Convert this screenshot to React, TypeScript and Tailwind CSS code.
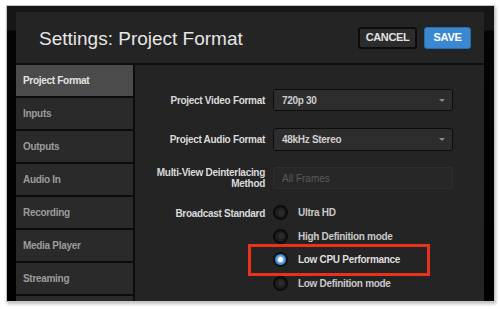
export default function App() {
  const menu = ['Project Format', 'Inputs', 'Outputs', 'Audio In', 'Recording', 'Media Player', 'Streaming', ''];

  const standards = [
    { label: 'Ultra HD', selected: false },
    { label: 'High Definition mode', selected: false },
    { label: 'Low CPU Performance', selected: true },
    { label: 'Low Definition mode', selected: false },
  ];

  const font = { fontFamily: '"Liberation Sans", Arial, sans-serif' };

  return (
    <div className="w-[500px] h-[309px] bg-white pt-[5px] pl-[6px] overflow-hidden" style={font}>
      <div className="w-[489px] h-[297px] border border-[#c4c4c4] shadow-[1px_2px_3px_rgba(0,0,0,0.25)]">
        <div className="h-full flex pt-[6px] pl-[9px] pr-[10px] overflow-hidden bg-[linear-gradient(to_bottom,#161616_0,#161616_24px,#050505_25px,#000_100%)]">
          <div className="w-[468px] flex flex-col bg-[#242424]">
            {/* Header */}
            <div className="h-[53px] shrink-0 flex items-center justify-between pl-[23px] pr-[13px] border-b-2 border-[#0e0e0e]">
              <h1 className="text-[19px] text-[#e6e6e6] leading-none pt-[1px]">Settings: Project Format</h1>
              <div className="flex gap-[7px]">
                <button className="w-[59px] h-[22px] rounded-[3px] bg-[#2c2c2c] border-2 border-[#0c0c0c] text-[11px] font-bold tracking-[-0.4px] text-[#e2e2e2]">
                  CANCEL
                </button>
                <button className="w-[47px] h-[22px] rounded-[3px] bg-[#3b88d2] border border-[#2c6aa8] text-[11px] font-bold tracking-[-0.3px] text-white">
                  SAVE
                </button>
              </div>
            </div>

            <div className="flex flex-1">
              {/* Sidebar */}
              <div className="w-[119px] shrink-0 flex flex-col gap-[2px] bg-[#0c0c0c] border-r-2 border-[#0c0c0c]">
                {menu.map((item, i) => (
                  <div
                    key={i}
                    className={
                      i === 0
                        ? 'h-[31px] shrink-0 flex items-center pl-[7px] bg-[#4b4b4b] text-[10px] font-bold tracking-[-0.3px] text-[#e4e4e4]'
                        : 'h-[31px] shrink-0 flex items-center pl-[7px] bg-[#2a2a2a] text-[10px] font-bold tracking-[-0.3px] text-[#9c9c9c]'
                    }
                  >
                    {item}
                  </div>
                ))}
              </div>

              {/* Form */}
              <div className="flex-1 flex flex-col pt-[24px] text-[10px] font-bold tracking-[-0.3px]">
                <div className="flex items-center h-[22px]">
                  <div className="w-[130px] text-right text-[#dadada]">Project Video Format</div>
                  <div className="ml-[8px] w-[180px] h-[22px] rounded-[3px] bg-[#2d2d2d] border border-[#0d0d0d] flex items-center justify-between pl-[8px] pr-[7px] text-[#cfcfcf]">
                    <span>720p 30</span>
                    <span className="w-0 h-0 border-l-[3px] border-r-[3px] border-t-[3px] border-l-transparent border-r-transparent border-t-[#8a8a8a]"></span>
                  </div>
                </div>

                <div className="flex items-center h-[23px] mt-[17px]">
                  <div className="w-[130px] text-right text-[#dadada]">Project Audio Format</div>
                  <div className="ml-[8px] w-[180px] h-[23px] rounded-[3px] bg-[#2d2d2d] border border-[#0d0d0d] flex items-center justify-between pl-[8px] pr-[7px] text-[#cfcfcf]">
                    <span>48kHz Stereo</span>
                    <span className="w-0 h-0 border-l-[3px] border-r-[3px] border-t-[3px] border-l-transparent border-r-transparent border-t-[#8a8a8a]"></span>
                  </div>
                </div>

                <div className="flex items-center h-[22px] mt-[16px]">
                  <div className="w-[130px] text-right text-[#dadada] leading-[11px]">
                    Multi-View Deinterlacing
                    <br />
                    Method
                  </div>
                  <div className="ml-[8px] w-[180px] h-[22px] rounded-[3px] bg-[#272727] border border-[#2e2e2e] flex items-center pl-[8px] font-normal tracking-normal text-[#5a5a5a]">
                    All Frames
                  </div>
                </div>

                <div className="flex mt-[12px]">
                  <div className="w-[130px] text-right text-[#dadada] pt-[5px]">Broadcast Standard</div>
                  <div className="ml-[8px] flex flex-col">
                    {standards.map((s) => (
                      <div key={s.label} className="relative h-[23.5px] flex items-center gap-[10px]">
                        {s.selected ? (
                          <span className="w-[15px] h-[15px] rounded-full bg-[#3a86cf] border-2 border-[#101010] flex items-center justify-center">
                            <span className="w-[5px] h-[5px] rounded-full bg-white shadow-[0_0_2px_1px_rgba(220,235,255,0.7)]"></span>
                          </span>
                        ) : (
                          <span className="w-[15px] h-[15px] rounded-full bg-[#1e1e1e] border-2 border-[#0b0b0b] flex items-center justify-center">
                            <span className="w-[6px] h-[6px] rounded-full bg-[#2b2b2b]"></span>
                          </span>
                        )}
                        <span className={s.selected ? 'text-[#dedede]' : 'text-[#c8c8c8]'}>{s.label}</span>
                        {s.selected && (
                          <span className="absolute left-[-25px] top-[-4px] w-[182px] h-[32px] border-[3px] border-[#e8321c]"></span>
                        )}
                      </div>
                    ))}
                  </div>
                </div>
              </div>
            </div>
          </div>
        </div>
      </div>
    </div>
  );
}
